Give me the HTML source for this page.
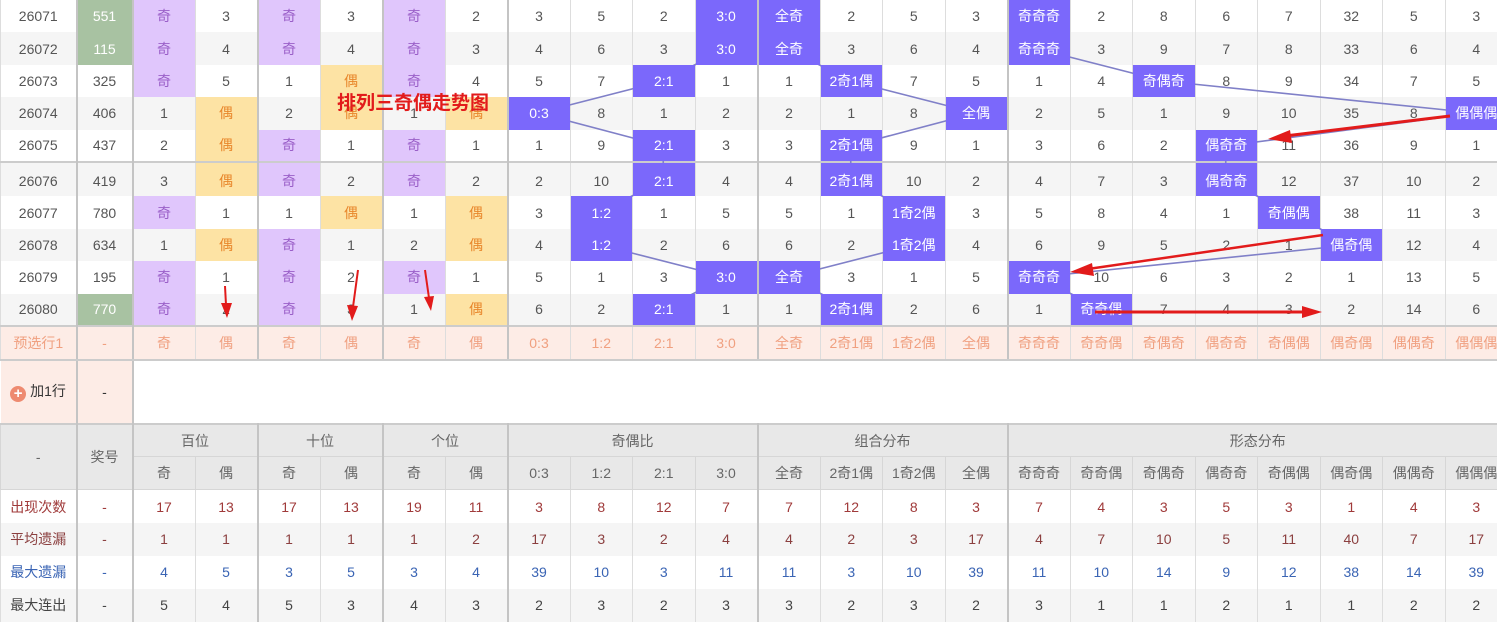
<!DOCTYPE html>
<html><head><meta charset="utf-8">
<style>
html,body{margin:0;padding:0;width:1497px;height:624px;overflow:hidden;background:#fff}
body{position:relative;font-family:"Liberation Sans","Noto Sans CJK SC",sans-serif;font-size:14px;color:#555}
table{border-collapse:collapse;table-layout:fixed;width:1507px;position:absolute;left:0;top:0}
td{text-align:center;padding:0;border:1px solid #ddd;white-space:nowrap;overflow:hidden}
tr.d td{border-top:none;border-bottom:none}
tr.d{height:32.4px}
tr.s{background:#f5f5f5}
tr.d td:nth-child(2),tr.d td:nth-child(3),tr.d td:nth-child(5),tr.d td:nth-child(7),tr.d td:nth-child(9),tr.d td:nth-child(13),tr.d td:nth-child(17){border-left:2px solid #c4c4c4}
tr.sep{height:34.4px}
tr.sep td{border-top:2px solid #ccc;padding-top:2px}
.p{background:#e0c6fc;color:#9a5fc8}
.y{background:#fde3a4;color:#e8862a}
.g{background:#a8c2a2;color:#fff}
.h{background:#7b68fb;color:#fff;position:relative;z-index:2}
tr.pre{height:34px;background:#fdece6;color:#f0a080}
tr.pre td{border-top:2px solid #ccc;border-bottom:2px solid #ccc}
tr.add{height:64px}
tr.add td{border:none}
.pk{background:#fdece6;color:#333}
tr.hd{height:33px;background:#e8e8e8;color:#666}
tr.hd td{border-color:#d6d6d6}
.bl{border-left:2px solid #c4c4c4 !important}
tr.st{height:33px}
.c1{color:#a03a3a}.c2{color:#8b3f3f}.c3{color:#3a64b4}.c4{color:#444}
.plus{display:inline-block;width:16px;height:16px;border-radius:50%;background:#ee8a70;color:#fff;font-size:15px;line-height:16px;vertical-align:-2px;margin-right:4px;font-weight:bold}
svg{position:absolute;left:0;top:0}
</style></head><body>
<table>
<colgroup><col style="width:76px"><col style="width:56px">
<col style="width:62.5px"><col style="width:62.5px"><col style="width:62.5px"><col style="width:62.5px"><col style="width:62.5px"><col style="width:62.5px"><col style="width:62.5px"><col style="width:62.5px"><col style="width:62.5px"><col style="width:62.5px"><col style="width:62.5px"><col style="width:62.5px"><col style="width:62.5px"><col style="width:62.5px"><col style="width:62.5px"><col style="width:62.5px"><col style="width:62.5px"><col style="width:62.5px"><col style="width:62.5px"><col style="width:62.5px"><col style="width:62.5px"><col style="width:62.5px"></colgroup>
<tr class="d"><td>26071</td><td class="g">551</td><td class="p">奇</td><td>3</td><td class="p">奇</td><td>3</td><td class="p">奇</td><td>2</td><td>3</td><td>5</td><td>2</td><td class="h">3:0</td><td class="h">全奇</td><td>2</td><td>5</td><td>3</td><td class="h">奇奇奇</td><td>2</td><td>8</td><td>6</td><td>7</td><td>32</td><td>5</td><td>3</td></tr>
<tr class="d s"><td>26072</td><td class="g">115</td><td class="p">奇</td><td>4</td><td class="p">奇</td><td>4</td><td class="p">奇</td><td>3</td><td>4</td><td>6</td><td>3</td><td class="h">3:0</td><td class="h">全奇</td><td>3</td><td>6</td><td>4</td><td class="h">奇奇奇</td><td>3</td><td>9</td><td>7</td><td>8</td><td>33</td><td>6</td><td>4</td></tr>
<tr class="d"><td>26073</td><td>325</td><td class="p">奇</td><td>5</td><td>1</td><td class="y">偶</td><td class="p">奇</td><td>4</td><td>5</td><td>7</td><td class="h">2:1</td><td>1</td><td>1</td><td class="h">2奇1偶</td><td>7</td><td>5</td><td>1</td><td>4</td><td class="h">奇偶奇</td><td>8</td><td>9</td><td>34</td><td>7</td><td>5</td></tr>
<tr class="d s"><td>26074</td><td>406</td><td>1</td><td class="y">偶</td><td>2</td><td class="y">偶</td><td>1</td><td class="y">偶</td><td class="h">0:3</td><td>8</td><td>1</td><td>2</td><td>2</td><td>1</td><td>8</td><td class="h">全偶</td><td>2</td><td>5</td><td>1</td><td>9</td><td>10</td><td>35</td><td>8</td><td class="h">偶偶偶</td></tr>
<tr class="d"><td>26075</td><td>437</td><td>2</td><td class="y">偶</td><td class="p">奇</td><td>1</td><td class="p">奇</td><td>1</td><td>1</td><td>9</td><td class="h">2:1</td><td>3</td><td>3</td><td class="h">2奇1偶</td><td>9</td><td>1</td><td>3</td><td>6</td><td>2</td><td class="h">偶奇奇</td><td>11</td><td>36</td><td>9</td><td>1</td></tr>
<tr class="d s sep"><td>26076</td><td>419</td><td>3</td><td class="y">偶</td><td class="p">奇</td><td>2</td><td class="p">奇</td><td>2</td><td>2</td><td>10</td><td class="h">2:1</td><td>4</td><td>4</td><td class="h">2奇1偶</td><td>10</td><td>2</td><td>4</td><td>7</td><td>3</td><td class="h">偶奇奇</td><td>12</td><td>37</td><td>10</td><td>2</td></tr>
<tr class="d"><td>26077</td><td>780</td><td class="p">奇</td><td>1</td><td>1</td><td class="y">偶</td><td>1</td><td class="y">偶</td><td>3</td><td class="h">1:2</td><td>1</td><td>5</td><td>5</td><td>1</td><td class="h">1奇2偶</td><td>3</td><td>5</td><td>8</td><td>4</td><td>1</td><td class="h">奇偶偶</td><td>38</td><td>11</td><td>3</td></tr>
<tr class="d s"><td>26078</td><td>634</td><td>1</td><td class="y">偶</td><td class="p">奇</td><td>1</td><td>2</td><td class="y">偶</td><td>4</td><td class="h">1:2</td><td>2</td><td>6</td><td>6</td><td>2</td><td class="h">1奇2偶</td><td>4</td><td>6</td><td>9</td><td>5</td><td>2</td><td>1</td><td class="h">偶奇偶</td><td>12</td><td>4</td></tr>
<tr class="d"><td>26079</td><td>195</td><td class="p">奇</td><td>1</td><td class="p">奇</td><td>2</td><td class="p">奇</td><td>1</td><td>5</td><td>1</td><td>3</td><td class="h">3:0</td><td class="h">全奇</td><td>3</td><td>1</td><td>5</td><td class="h">奇奇奇</td><td>10</td><td>6</td><td>3</td><td>2</td><td>1</td><td>13</td><td>5</td></tr>
<tr class="d s"><td>26080</td><td class="g">770</td><td class="p">奇</td><td>2</td><td class="p">奇</td><td>3</td><td>1</td><td class="y">偶</td><td>6</td><td>2</td><td class="h">2:1</td><td>1</td><td>1</td><td class="h">2奇1偶</td><td>2</td><td>6</td><td>1</td><td class="h">奇奇偶</td><td>7</td><td>4</td><td>3</td><td>2</td><td>14</td><td>6</td></tr>
<tr class="d pre"><td>预选行1</td><td>-</td><td>奇</td><td>偶</td><td>奇</td><td>偶</td><td>奇</td><td>偶</td><td>0:3</td><td>1:2</td><td>2:1</td><td>3:0</td><td>全奇</td><td>2奇1偶</td><td>1奇2偶</td><td>全偶</td><td>奇奇奇</td><td>奇奇偶</td><td>奇偶奇</td><td>偶奇奇</td><td>奇偶偶</td><td>偶奇偶</td><td>偶偶奇</td><td>偶偶偶</td></tr>
<tr class="add"><td class="pk"><span class="plus">+</span>加1行</td><td class="pk bl">-</td><td colspan="22" class="bl"></td></tr>
<tr class="hd" style="border-top:2px solid #ccc"><td rowspan="2">-</td><td rowspan="2" class="bl">奖号</td><td colspan="2" class="bl">百位</td><td colspan="2" class="bl">十位</td><td colspan="2" class="bl">个位</td><td colspan="4" class="bl">奇偶比</td><td colspan="4" class="bl">组合分布</td><td colspan="8" class="bl">形态分布</td></tr>
<tr class="hd"><td class="bl">奇</td><td>偶</td><td class="bl">奇</td><td>偶</td><td class="bl">奇</td><td>偶</td><td class="bl">0:3</td><td>1:2</td><td>2:1</td><td>3:0</td><td class="bl">全奇</td><td>2奇1偶</td><td>1奇2偶</td><td>全偶</td><td class="bl">奇奇奇</td><td>奇奇偶</td><td>奇偶奇</td><td>偶奇奇</td><td>奇偶偶</td><td>偶奇偶</td><td>偶偶奇</td><td>偶偶偶</td></tr>
<tr class="d st c1"><td>出现次数</td><td>-</td><td>17</td><td>13</td><td>17</td><td>13</td><td>19</td><td>11</td><td>3</td><td>8</td><td>12</td><td>7</td><td>7</td><td>12</td><td>8</td><td>3</td><td>7</td><td>4</td><td>3</td><td>5</td><td>3</td><td>1</td><td>4</td><td>3</td></tr>
<tr class="d st s c2"><td>平均遗漏</td><td>-</td><td>1</td><td>1</td><td>1</td><td>1</td><td>1</td><td>2</td><td>17</td><td>3</td><td>2</td><td>4</td><td>4</td><td>2</td><td>3</td><td>17</td><td>4</td><td>7</td><td>10</td><td>5</td><td>11</td><td>40</td><td>7</td><td>17</td></tr>
<tr class="d st c3"><td>最大遗漏</td><td>-</td><td>4</td><td>5</td><td>3</td><td>5</td><td>3</td><td>4</td><td>39</td><td>10</td><td>3</td><td>11</td><td>11</td><td>3</td><td>10</td><td>39</td><td>11</td><td>10</td><td>14</td><td>9</td><td>12</td><td>38</td><td>14</td><td>39</td></tr>
<tr class="d st s c4"><td>最大连出</td><td>-</td><td>5</td><td>4</td><td>5</td><td>3</td><td>4</td><td>3</td><td>2</td><td>3</td><td>2</td><td>3</td><td>3</td><td>2</td><td>3</td><td>2</td><td>3</td><td>1</td><td>1</td><td>2</td><td>1</td><td>1</td><td>2</td><td>2</td></tr>
</table>
<svg width="1497" height="624" style="z-index:1" fill="none" stroke="#8080c8" stroke-width="1.6">
<polyline points="725.75,16 725.75,49 663.25,81 538.25,113 663.25,146 663.25,180 600.75,212 600.75,245 725.75,277 663.25,309"/>
<polyline points="788.25,16 788.25,49 850.75,81 975.75,113 850.75,146 850.75,180 913.25,212 913.25,245 788.25,277 850.75,309"/>
<polyline points="1038.25,16 1038.25,49 1163.25,81 1475.75,113 1225.75,146 1225.75,180 1288.25,212 1350.75,245 1038.25,277 1100.75,309"/>
</svg>
<svg width="1497" height="624" style="z-index:3" fill="#e21b1b" stroke="#e21b1b">
<line x1="1450" y1="116" x2="1285" y2="136" stroke-width="3"/><polygon points="1268,139 1290,130 1292,143" stroke="none"/>
<line x1="1323" y1="235" x2="1088" y2="269" stroke-width="2.5"/><polygon points="1070,272 1092,263 1094,276" stroke="none"/>
<line x1="1095" y1="312" x2="1305" y2="312" stroke-width="3"/><polygon points="1322,312 1302,306 1302,318" stroke="none"/>
<line x1="225" y1="286" x2="226" y2="305" stroke-width="2"/><polygon points="227,318 221,303 232,303" stroke="none"/>
<line x1="358" y1="270" x2="353" y2="307" stroke-width="2"/><polygon points="352,321 347,305 358,306" stroke="none"/>
<line x1="425" y1="270" x2="429" y2="298" stroke-width="2"/><polygon points="431,311 424,297 434,296" stroke="none"/>
</svg>
<div style="position:absolute;left:337px;top:89px;z-index:4;color:#e21b1b;font-size:19px;font-weight:bold;font-family:'Noto Sans CJK SC',sans-serif;line-height:26px">排列三奇偶走势图</div>
</body></html>
